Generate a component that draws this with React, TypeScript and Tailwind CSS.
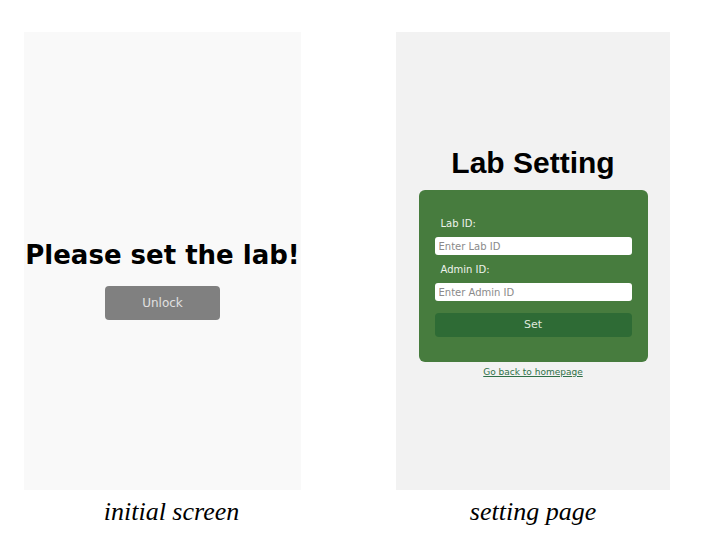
export default function App() {
  return (
    <div className="w-[712px] h-[556px] bg-white flex pt-[32px] pl-[24px] gap-[95px]">
      {/* initial screen */}
      <div className="flex flex-col w-[277px]">
        <div className="h-[458px] bg-[#f9f9f9] flex flex-col items-center pt-[208px]" style={{ fontFamily: '"DejaVu Sans", sans-serif' }}>
          <h1 className="text-[26px] font-bold text-black leading-[30px] whitespace-nowrap">Please set the lab!</h1>
          <button className="mt-[16px] w-[115px] h-[34px] rounded-[4px] bg-[#808080] text-[#e0e0e0] text-[12px]">Unlock</button>
        </div>
        <p className="mt-[6px] pl-[18px] text-center italic text-[26px] text-black leading-[32px]" style={{ fontFamily: '"Liberation Serif", serif' }}>initial screen</p>
      </div>

      {/* setting page */}
      <div className="flex flex-col w-[274px]">
        <div className="h-[458px] bg-[#f2f2f2] flex flex-col items-center pt-[113px]">
          <h1 className="text-[30px] font-bold text-black leading-[36px]" style={{ fontFamily: '"Liberation Sans", Arial, sans-serif' }}>Lab Setting</h1>
          <div className="mt-[9px] w-[229px] h-[172px] bg-[#477c3e] rounded-[6px] px-[16px] pt-[27px] flex flex-col" style={{ fontFamily: '"DejaVu Sans", sans-serif' }}>
            <label className="pl-[6px] text-[10px] text-[#eef3ec] leading-[14px]">Lab ID:</label>
            <input className="mt-[6px] h-[18px] w-full rounded-[3px] bg-white px-[4px] text-[10px] outline-none placeholder:text-[#8a8a8a]" placeholder="Enter Lab ID" />
            <label className="mt-[8px] pl-[6px] text-[10px] text-[#eef3ec] leading-[14px]">Admin ID:</label>
            <input className="mt-[6px] h-[18px] w-full rounded-[3px] bg-white px-[4px] text-[10px] outline-none placeholder:text-[#8a8a8a]" placeholder="Enter Admin ID" />
            <button className="mt-[12px] h-[24px] w-full rounded-[4px] bg-[#2e6b35] text-[11px] text-[#dfe9dc]">Set</button>
          </div>
          <a href="#" className="mt-[3px] text-[9px] text-[#2f7048] underline leading-[14px]" style={{ fontFamily: '"DejaVu Sans", sans-serif' }}>Go back to homepage</a>
        </div>
        <p className="mt-[6px] text-center italic text-[26px] text-black leading-[32px]" style={{ fontFamily: '"Liberation Serif", serif' }}>setting page</p>
      </div>
    </div>
  );
}
